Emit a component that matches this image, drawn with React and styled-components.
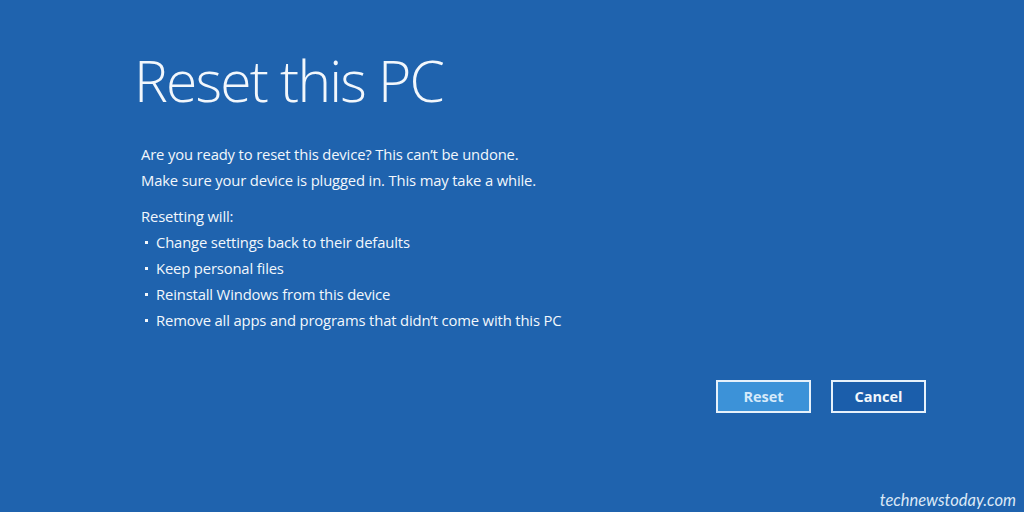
import React from 'react';
import styled, { createGlobalStyle } from 'styled-components';

const GlobalStyle = createGlobalStyle`
	html, body {
		margin: 0;
		padding: 0;
		background: #1f63ae;
	}
`;

const Screen = styled.div`
	display: flex;
	flex-direction: column;
	width: 1024px;
	height: 512px;
	box-sizing: border-box;
	padding: 40px 98px 0 134px;
	background: #1f63ae;
	color: #f2f7fc;
	font-family: "Open Sans", "Noto Sans", sans-serif;
	overflow: hidden;
	position: relative;
`;

const Title = styled.h1`
	margin: 0;
	font-size: 57px;
	font-weight: 300;
	line-height: 80px;
	letter-spacing: -1.8px;
`;

const Body = styled.div`
	display: flex;
	flex-direction: column;
	padding-left: 7px;
	margin-top: 21px;
	font-size: 14.8px;
	line-height: 26px;
	letter-spacing: -0.15px;
`;

const Paragraph = styled.div`
	margin-bottom: ${props => props.gap || 0}px;
`;

const List = styled.ul`
	list-style: none;
	margin: 0;
	padding: 0;
`;

const Item = styled.li`
	display: flex;
	align-items: center;

	&::before {
		content: "";
		width: 3px;
		height: 3px;
		margin: 0 8px 0 4px;
		background: #f2f7fc;
	}
`;

const Actions = styled.div`
	display: flex;
	justify-content: flex-end;
	gap: 20px;
	margin-top: 47px;
`;

const Button = styled.button`
	width: 95px;
	height: 33px;
	box-sizing: border-box;
	border: 2px solid #e6f1fb;
	background: ${props => (props.primary ? '#3c92d8' : '#1b5eab')};
	color: ${props => (props.primary ? '#d6eafa' : '#f2f7fc')};
	font-family: "Open Sans", "Noto Sans", sans-serif;
	font-size: 14.5px;
	font-weight: 700;
	cursor: pointer;
`;

const Watermark = styled.div`
	position: absolute;
	right: 8px;
	bottom: 2px;
	color: #dbe8f6;
	font-family: Lato, "Open Sans", sans-serif;
	font-style: italic;
	font-size: 16.5px;
`;

function App() {
	return (
		<Screen>
			<GlobalStyle />
			<Title>Reset this PC</Title>
			<Body>
				<Paragraph>Are you ready to reset this device? This can’t be undone.</Paragraph>
				<Paragraph gap={10}>Make sure your device is plugged in. This may take a while.</Paragraph>
				<Paragraph>Resetting will:</Paragraph>
				<List>
					<Item>Change settings back to their defaults</Item>
					<Item>Keep personal files</Item>
					<Item>Reinstall Windows from this device</Item>
					<Item>Remove all apps and programs that didn’t come with this PC</Item>
				</List>
			</Body>
			<Actions>
				<Button primary>Reset</Button>
				<Button>Cancel</Button>
			</Actions>
			<Watermark>technewstoday.com</Watermark>
		</Screen>
	);
}

export default App;
